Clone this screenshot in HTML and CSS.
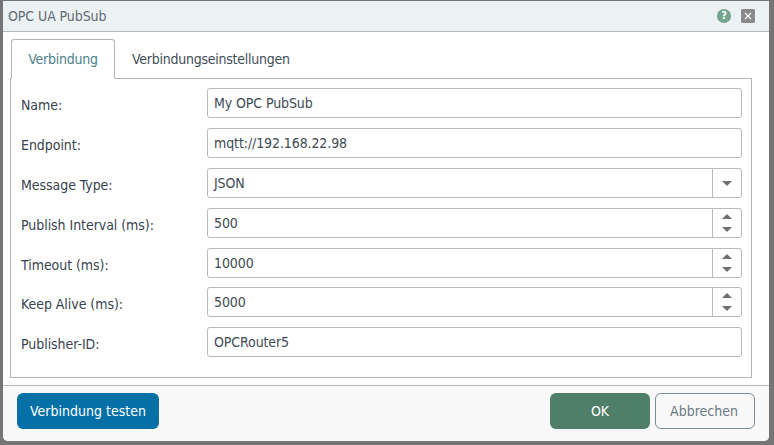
FILE: index.html
```html
<!DOCTYPE html>
<html lang="de">
<head>
<meta charset="utf-8">
<title>OPC UA PubSub</title>
<link rel="stylesheet" href="styles.css">
</head>
<body>
<div class="dialog">
  <header class="titlebar">
    <span class="title">OPC UA PubSub</span>
    <span class="help">?</span>
    <span class="close"><svg width="8" height="8" viewBox="0 0 8 8"><path d="M1 1l6 6M7 1l-6 6" stroke="#fff" stroke-width="1.1" fill="none"/></svg></span>
  </header>
  <div class="body">
    <nav class="tabs">
      <span class="tab active">Verbindung</span>
      <span class="tab">Verbindungseinstellungen</span>
    </nav>
    <form class="panel">
      <div class="row"><label>Name:</label><div class="field"><span class="value">My OPC PubSub</span></div></div>
      <div class="row"><label>Endpoint:</label><div class="field"><span class="value">mqtt://192.168.22.98</span></div></div>
      <div class="row"><label>Message Type:</label><div class="field"><span class="value">JSON</span><span class="side"><i class="down"></i></span></div></div>
      <div class="row"><label>Publish Interval (ms):</label><div class="field"><span class="value">500</span><span class="side spin"><i class="up"></i><i class="down"></i></span></div></div>
      <div class="row"><label>Timeout (ms):</label><div class="field"><span class="value">10000</span><span class="side spin"><i class="up"></i><i class="down"></i></span></div></div>
      <div class="row tight"><label>Keep Alive (ms):</label><div class="field"><span class="value">5000</span><span class="side spin"><i class="up"></i><i class="down"></i></span></div></div>
      <div class="row"><label>Publisher-ID:</label><div class="field"><span class="value">OPCRouter5</span></div></div>
    </form>
  </div>
  <footer class="footer">
    <button class="btn test" type="button">Verbindung testen</button>
    <span class="spacer"></span>
    <button class="btn ok" type="button">OK</button>
    <button class="btn cancel" type="button">Abbrechen</button>
  </footer>
</div>
</body>
</html>
```
FILE: styles.css
```css
* { box-sizing: border-box; }
html, body { margin: 0; height: 445px; overflow: hidden; }
body {
  background: #757575;
  padding: 1px 5px 4px 3px;
  font-family: "DejaVu Sans Condensed", "DejaVu Sans", sans-serif;
  font-stretch: condensed;
  font-size: 14px;
  color: #3d4a55;
}
.dialog {
  width: 766px;
  height: 440px;
  background: #fff;
  border-radius: 0 0 5px 5px;
  display: flex;
  flex-direction: column;
  overflow: hidden;
}
.titlebar {
  height: 31px;
  flex: none;
  background: #ecf1f3;
  border-bottom: 1px solid #b4b4b4;
  display: flex;
  align-items: center;
  padding: 0 14px 1px 5px;
  gap: 10px;
}
.title { flex: 1; font-size: 14px; color: #5f6b75; letter-spacing: -0.08px; }
.help {
  width: 14px; height: 14px; border-radius: 50%;
  background: #74a48e; color: #fff;
  font-size: 11px; font-weight: 700; line-height: 14px; text-align: center;
}
.close {
  width: 14px; height: 14px; border-radius: 1px;
  background: #8a8a8a;
  display: flex; align-items: center; justify-content: center;
}
.body { flex: 1; padding: 7px 17px 0 7px; display: flex; flex-direction: column; }
.tabs { display: flex; height: 39px; flex: none; margin-left: 1px; position: relative; z-index: 1; }
.tab {
  padding: 0 17px;
  display: flex; align-items: center;
  color: #3f4d58;
  height: 39px;
  letter-spacing: -0.25px;
}
.tab.active {
  width: 104px;
  justify-content: center;
  padding: 0;
  color: #4d8089;
  background: #fff;
  border: 1px solid #b4b4b4;
  border-bottom: 1px solid #fff;
  border-radius: 3px 3px 0 0;
  height: 40px;
}
.panel {
  width: 742px;
  height: 300px;
  border: 1px solid #b4b4b4;
  padding: 9px 9px 0 10px;
  display: flex;
  flex-direction: column;
  gap: 10px;
}
.row { display: flex; align-items: center; height: 30px; }
.tight { margin-top: -1px; }
.row label { width: 186px; flex: none; color: #37434e; padding-top: 4px; letter-spacing: -0.05px; }
.field {
  flex: 1;
  height: 30px;
  border: 1px solid #b9b9b9;
  border-radius: 3px;
  display: flex;
  align-items: center;
  color: #3d4a55;
}
.value { flex: 1; padding-left: 6px; letter-spacing: -0.1px; }
.side {
  width: 29px; height: 100%;
  border-left: 1px solid #b9b9b9;
  display: flex; flex-direction: column; align-items: center; justify-content: center;
}
.spin { gap: 8px; }
.side i { width: 0; height: 0; border-left: 5px solid transparent; border-right: 5px solid transparent; }
.side .down { border-top: 5px solid #707070; }
.side .up { border-bottom: 5px solid #707070; }
.footer {
  height: 56px;
  flex: none;
  background: #f8f8f8;
  border-top: 1px solid #b4b4b4;
  display: flex;
  padding: 7px 14px 0;
  gap: 5px;
  align-items: flex-start;
}
.spacer { flex: 1; }
.btn {
  height: 36px;
  border-radius: 6px;
  border: 0;
  font: inherit;
  padding: 0;
}
.test { width: 142px; background: #0570a6; color: #fff; }
.ok { width: 100px; background: #4f7f68; color: #fff; }
.cancel { width: 100px; background: #f8f8f8; color: #6a7885; border: 1px solid #7c8a96; padding-right: 2px; }
```
